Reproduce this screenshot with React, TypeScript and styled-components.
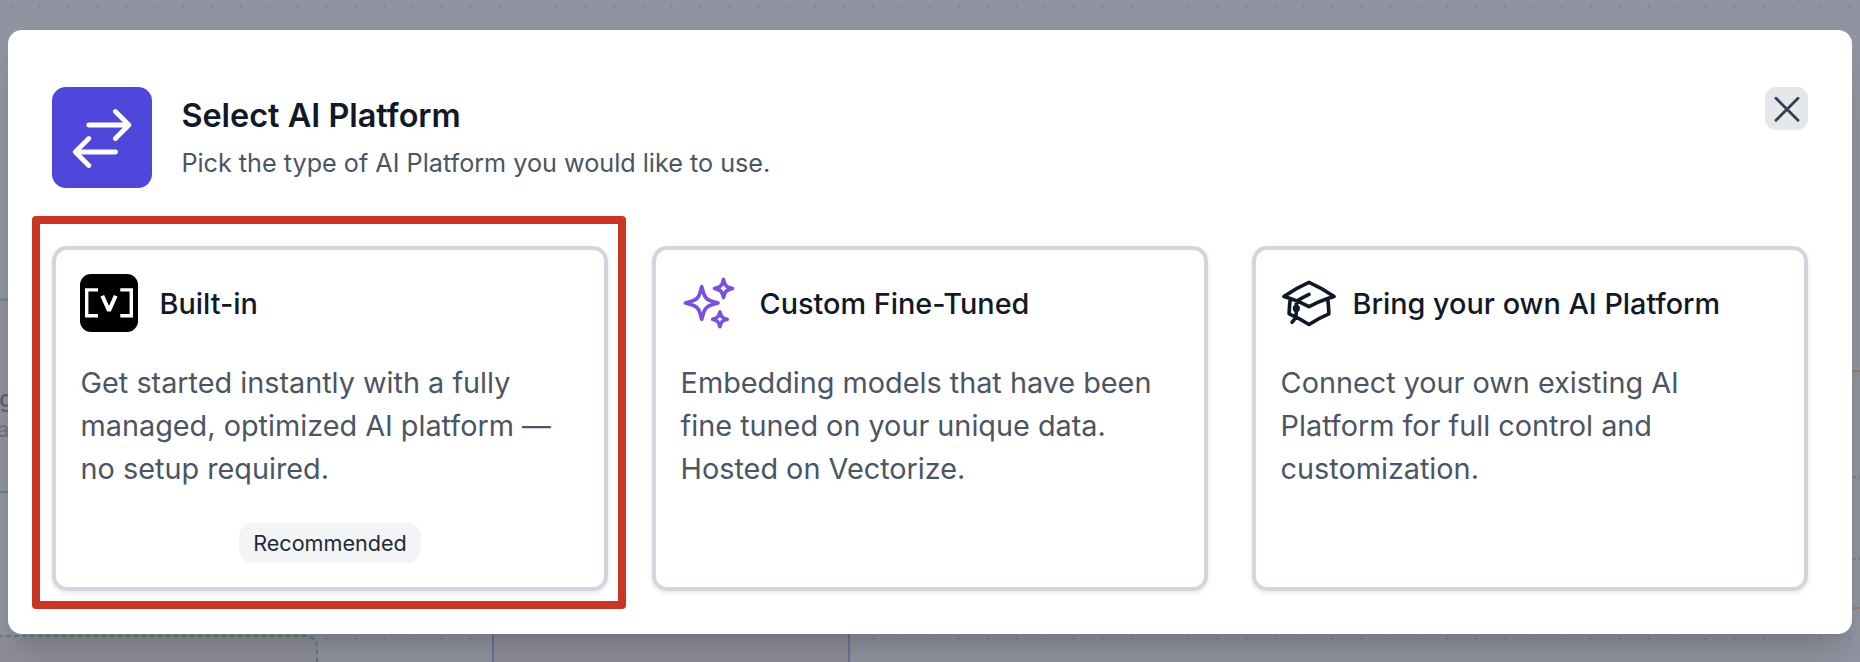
import React from 'react';
import styled, { createGlobalStyle } from 'styled-components';

const Global = createGlobalStyle`
  * { box-sizing: border-box; }
  body { margin: 0; overflow: hidden; font-family: Inter, "Liberation Sans", sans-serif; color: #111827; }
  h1, h2, p { margin: 0; }
`;

const Page = styled.div`
  position: relative;
  width: 1860px;
  height: 662px;
  padding: 30px 8px 28px;
  overflow: hidden;
  background: #9094a0;
`;

const Canvas = styled.svg`
  position: absolute;
  inset: 0;
`;

const Modal = styled.section`
  position: relative;
  height: 604px;
  padding: 57px 44px 44px;
  border-radius: 14px;
  background: #fff;
  box-shadow: 0 36px 45px -9px rgba(0, 0, 0, 0.1), 0 14px 18px -9px rgba(0, 0, 0, 0.12);
`;

const Header = styled.header`
  display: flex;
  align-items: flex-start;
  height: 101px;
`;

const Badge = styled.div`
  display: grid;
  place-items: center;
  width: 100px;
  height: 101px;
  border-radius: 14px;
  background: #4f46dc;
`;

const Heading = styled.div`
  flex: 1;
  padding: 8px 0 0 29.4px;
`;

const Title = styled.h1`
  font-size: 32.4px;
  line-height: 42px;
  font-weight: 600;
`;

const Subtitle = styled.p`
  margin-top: 8px;
  font-size: 25.2px;
  line-height: 36px;
  color: #4b5563;
`;

const CloseButton = styled.button`
  display: grid;
  place-items: center;
  width: 43px;
  height: 43px;
  padding: 0;
  border: 0;
  border-radius: 11px;
  background: #e5e7eb;
`;

const Cards = styled.div`
  display: grid;
  grid-template-columns: repeat(3, 1fr);
  gap: 44px;
  margin-top: 58px;
`;

const Card = styled.article`
  display: flex;
  flex-direction: column;
  height: 345px;
  padding: 24px 24px 24px;
  border: 4px solid #d3d5dd;
  border-radius: 15px;
  box-shadow: 0 2px 5px rgba(0, 0, 0, 0.1);
`;

const CardHead = styled.div<{ $gap: number }>`
  display: flex;
  align-items: center;
  gap: ${(p) => p.$gap}px;
  height: 58px;
`;

const CardTitle = styled.h2`
  font-size: 28.8px;
  line-height: 43px;
  font-weight: 500;
`;

const CardText = styled.p`
  margin: 29px 0 0 0.6px;
  font-size: 28.8px;
  line-height: 43px;
  color: #4b5563;
`;

const Tag = styled.span`
  align-self: center;
  margin-top: auto;
  padding: 0 14px;
  border-radius: 14px;
  background: #f3f4f6;
  font-size: 21.6px;
  line-height: 40px;
  color: #1f2937;
`;

const Highlight = styled.div`
  position: absolute;
  left: 32px;
  top: 216px;
  width: 594px;
  height: 393px;
  border: 8px solid #c93625;
  border-radius: 4px;
`;

const Backdrop = () => (
  <Canvas width="1860" height="662">
    <defs>
      <pattern id="dots" x="-3.5" y="-8" width="28.73" height="28.73" patternUnits="userSpaceOnUse">
        <circle cx="14.4" cy="14.4" r="1" fill="#777c8a" />
      </pattern>
    </defs>
    <rect width="1860" height="30" fill="url(#dots)" />
    <rect x="320" y="624" width="1540" height="28" fill="url(#dots)" />
    <rect x="-20" y="299.700" width="80" height="192.300" fill="#8f919d" stroke="#66867f" strokeWidth="2" />
    <text x="-1" y="407" fontFamily="Inter" fontSize="24" fontWeight="500" fill="#5f6370">g</text>
    <text x="-3" y="436.500" fontFamily="Inter" fontSize="21.600" fill="#6f7381">ac</text>
    <rect x="-20" y="636" width="337" height="60" rx="10" fill="#8d8e9a" stroke="#5f8172" strokeWidth="2" strokeDasharray="5 3" />
    <rect x="493" y="560" width="356" height="140" fill="#8d8e99" stroke="#786b9c" strokeWidth="2" />
    <rect x="1820" y="371" width="80" height="237" fill="#8e909b" stroke="#9c7b76" strokeWidth="2" />
    <path d="M1852 477h8M1852 559h8" stroke="#7d808d" strokeWidth="2" strokeDasharray="4 2" />
  </Canvas>
);

const SwapIcon = () => (
  <svg width="60" height="60" viewBox="0 0 60 60" fill="none" stroke="#fff" strokeWidth="4.8" strokeLinecap="round" strokeLinejoin="round">
    <path d="M16.700 17H56.900M43.400 3.500L56.900 17L43.400 30.500M43.600 44H3.300M16.800 30.500L3.300 44L16.800 57.500" />
  </svg>
);

const CloseIcon = () => (
  <svg width="26" height="26" fill="none" stroke="#374151" strokeWidth="2.9" strokeLinecap="round">
    <path d="M2 2.200L24 24.200M24 2.200L2 24.200" />
  </svg>
);

const BuiltInIcon = () => (
  <svg width="58" height="58" fill="none" stroke="#fff" strokeWidth="3.4">
    <rect width="58" height="58" rx="11" fill="#000" stroke="none" />
    <path d="M18 15.900H6.700V41.800H18M40.300 15.900H51.300V41.800H40.300" />
    <path d="M22.300 21.700L29 36.700L35.700 21.700" strokeWidth="4" strokeLinejoin="bevel" />
  </svg>
);

const OutlineIcon = ({ color, d }: { color: string; d: string }) => (
  <svg width="58" height="58" viewBox="0 0 24 24" fill="none" stroke={color} strokeWidth="1.5" strokeLinecap="round" strokeLinejoin="round">
    <path d={d} />
  </svg>
);

const sparkles =
  'M9.813 15.904 9 18.75l-.813-2.846a4.5 4.5 0 0 0-3.09-3.09L2.25 12l2.846-.813a4.5 4.5 0 0 0 3.09-3.09L9 5.25l.813 2.846a4.5 4.5 0 0 0 3.09 3.09L15.75 12l-2.846.813a4.5 4.5 0 0 0-3.09 3.09Z' +
  'M18.259 8.715 18 9.75l-.259-1.035a3.375 3.375 0 0 0-2.455-2.456L14.25 6l1.036-.259a3.375 3.375 0 0 0 2.455-2.456L18 2.25l.259 1.035a3.375 3.375 0 0 0 2.456 2.456L21.75 6l-1.035.259a3.375 3.375 0 0 0-2.456 2.456Z' +
  'M16.894 20.567 16.5 21.75l-.394-1.183a2.25 2.25 0 0 0-1.423-1.423L13.5 18.75l1.183-.394a2.25 2.25 0 0 0 1.423-1.423l.394-1.183.394 1.183a2.25 2.25 0 0 0 1.423 1.423l1.183.394-1.183.394a2.25 2.25 0 0 0-1.423 1.423Z';

const academicCap =
  'M4.26 10.147a60.438 60.438 0 0 0-.491 6.347A48.62 48.62 0 0 1 12 20.904a48.62 48.62 0 0 1 8.232-4.41 60.46 60.46 0 0 0-.491-6.347m-15.482 0a50.636 50.636 0 0 0-2.658-.813A59.906 59.906 0 0 1 12 3.493a59.903 59.903 0 0 1 10.399 5.84c-.896.248-1.783.52-2.658.814m-15.482 0A50.717 50.717 0 0 1 12 13.489a50.702 50.702 0 0 1 7.74-3.342' +
  'M6.75 15a.75.75 0 1 0 0-1.5.75.75 0 0 0 0 1.5Zm0 0v-3.675A55.378 55.378 0 0 1 12 8.443m-7.007 11.55A5.981 5.981 0 0 0 6.75 15.75v-1.5';

const OptionCard = ({ icon, title, text, gap, tag }: { icon: React.ReactNode; title: string; text: string[]; gap: number; tag?: string }) => (
  <Card>
    <CardHead $gap={gap}>{icon}<CardTitle>{title}</CardTitle></CardHead>
    <CardText>{text.map((line) => <React.Fragment key={line}>{line}<br /></React.Fragment>)}</CardText>
    {tag && <Tag>{tag}</Tag>}
  </Card>
);

export default function App() {
  return (
    <Page>
      <Global />
      <Backdrop />
      <Modal>
        <Header>
          <Badge><SwapIcon /></Badge>
          <Heading>
            <Title>Select AI Platform</Title>
            <Subtitle>Pick the type of AI Platform you would like to use.</Subtitle>
          </Heading>
          <CloseButton aria-label="Close"><CloseIcon /></CloseButton>
        </Header>
        <Cards>
          <OptionCard icon={<BuiltInIcon />} title="Built-in" gap={21.6} tag="Recommended" text={['Get started instantly with a fully', 'managed, optimized AI platform —', 'no setup required.']} />
          <OptionCard icon={<OutlineIcon color="#7a4fe0" d={sparkles} />} title="Custom Fine-Tuned" gap={21.6} text={['Embedding models that have been', 'fine tuned on your unique data.', 'Hosted on Vectorize.']} />
          <OptionCard icon={<OutlineIcon color="#111827" d={academicCap} />} title="Bring your own AI Platform" gap={14.6} text={['Connect your own existing AI', 'Platform for full control and', 'customization.']} />
        </Cards>
      </Modal>
      <Highlight />
    </Page>
  );
}
